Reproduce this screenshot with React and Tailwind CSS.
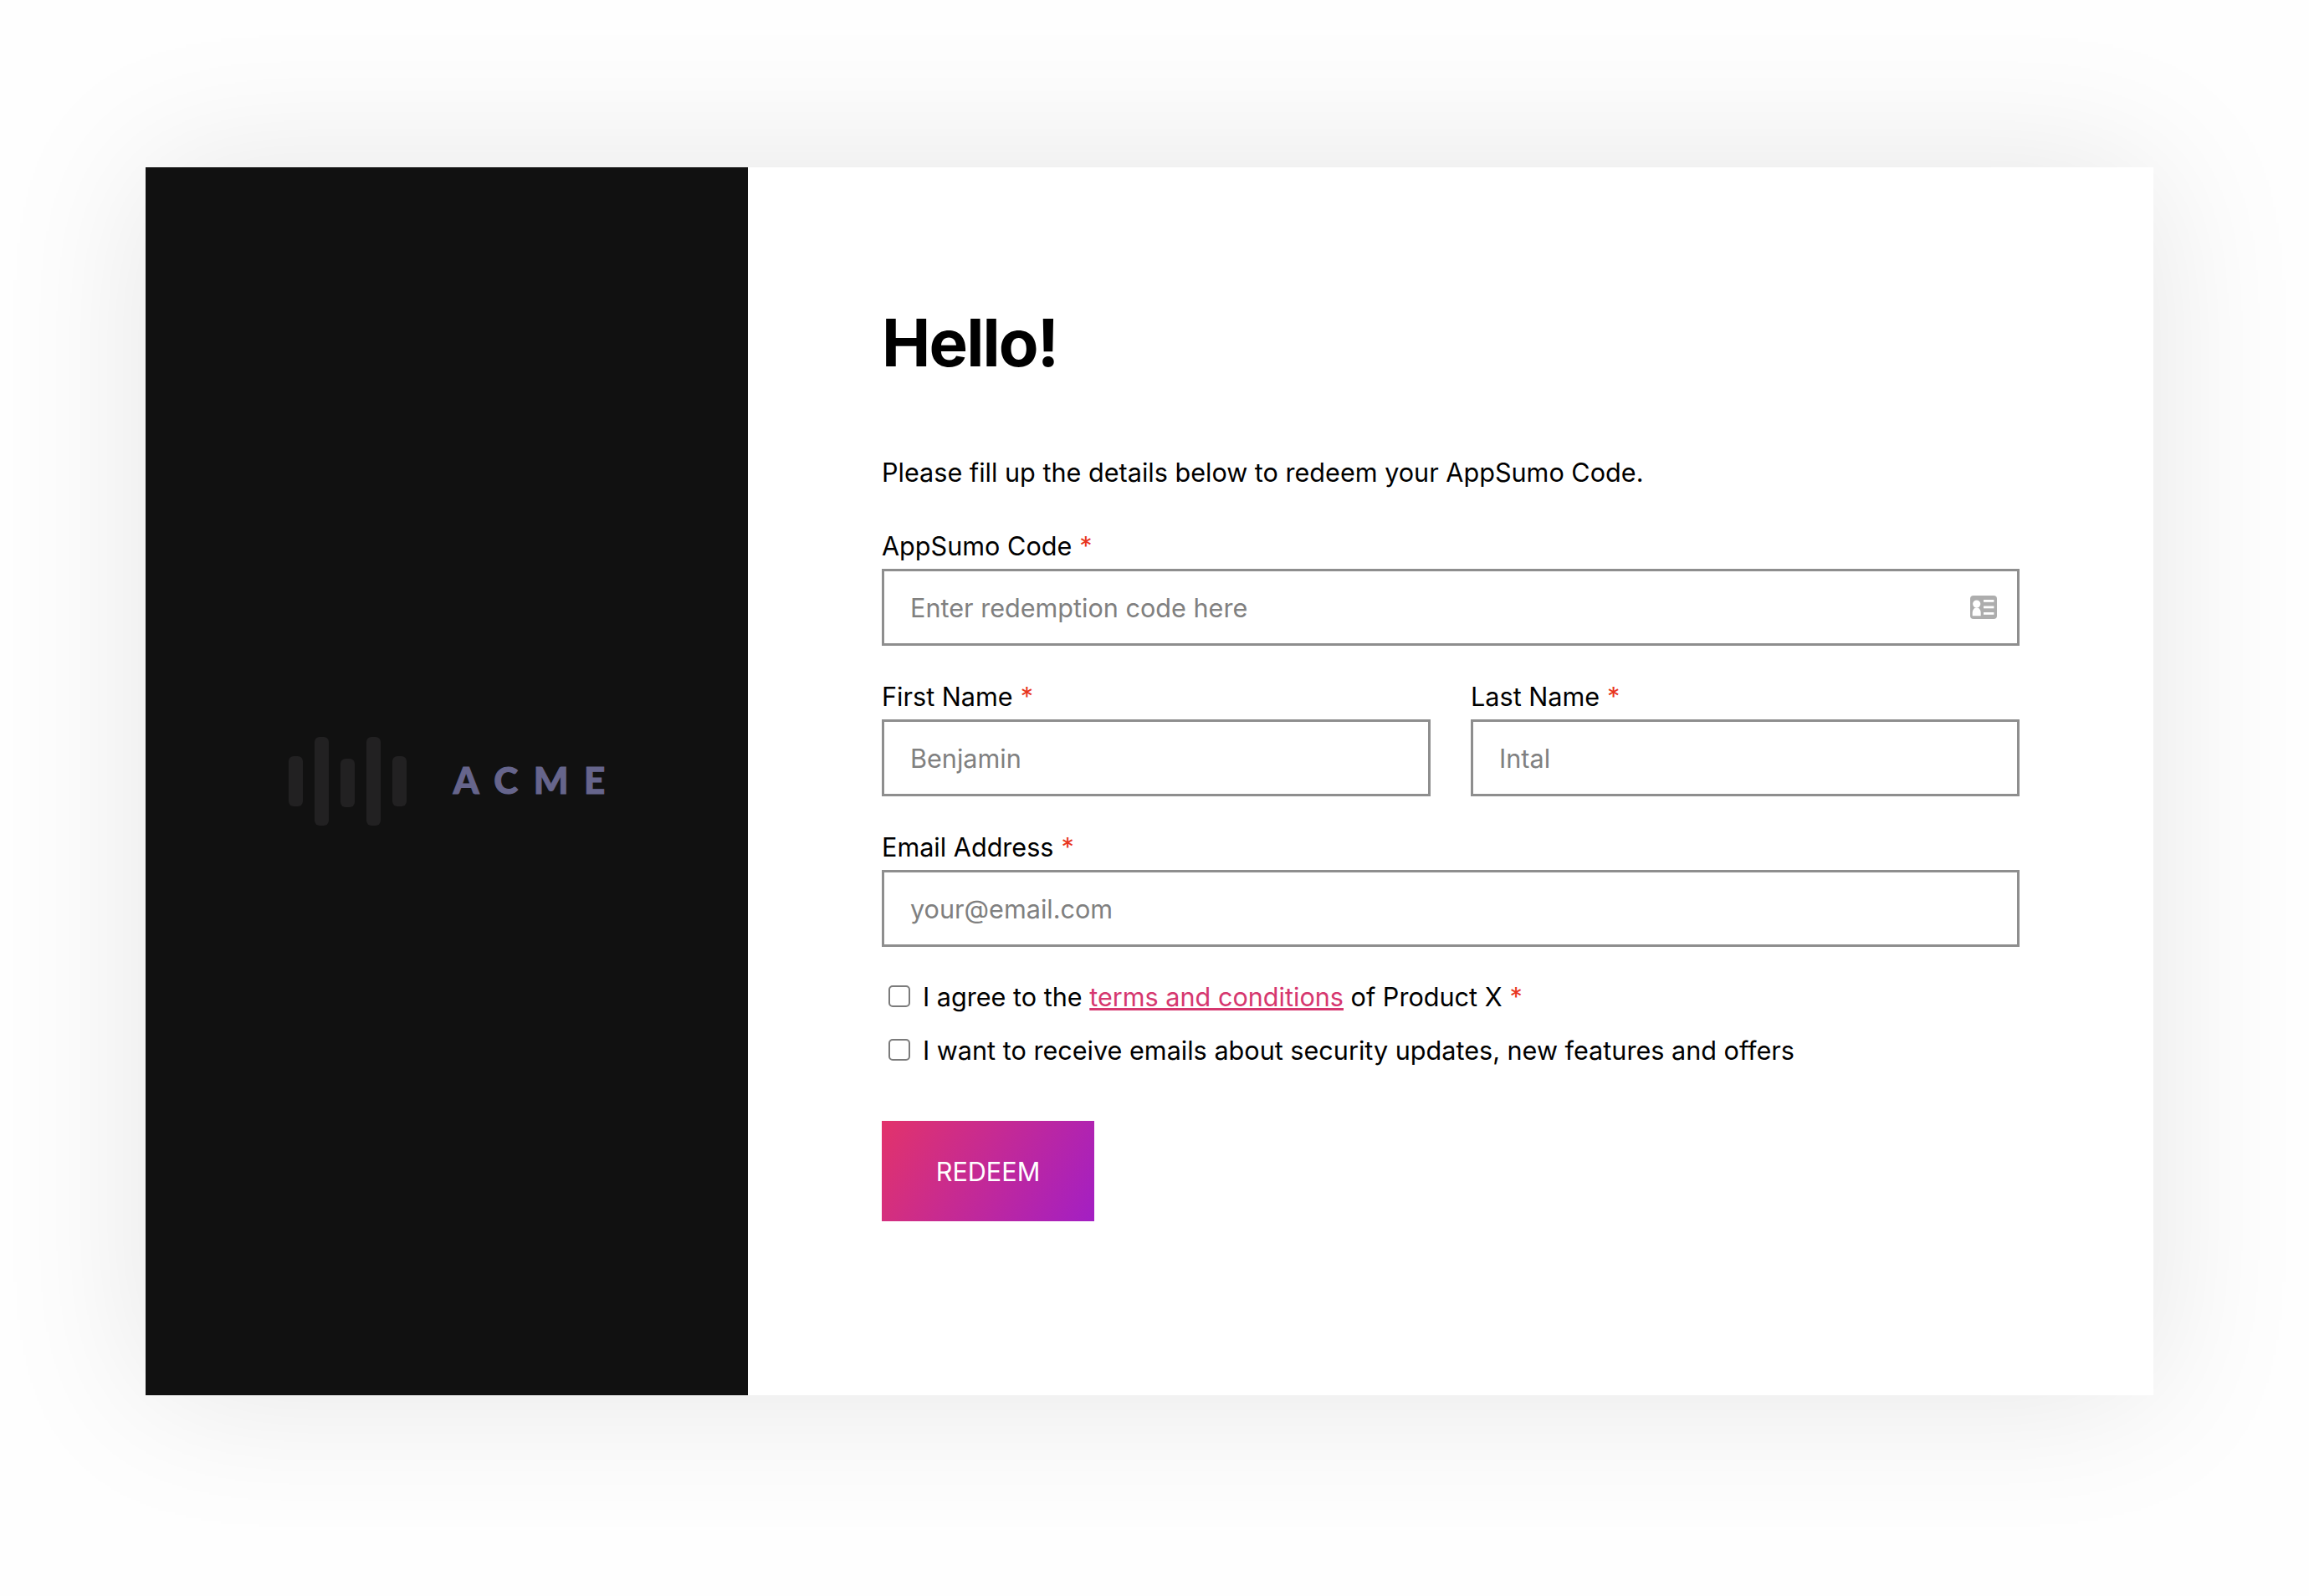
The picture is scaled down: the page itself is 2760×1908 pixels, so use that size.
import React from "react";

const Req = () => <span className="text-[#e8351e] ml-[9px]">*</span>;

const Field = ({ label, placeholder, icon }) => (
  <div className="flex flex-col">
    <label className="text-[30.6px] leading-[40px] text-black">
      {label}
      <Req />
    </label>
    <div className="relative mt-[7px]">
      <input
        placeholder={placeholder}
        className="w-full h-[92px] border-[3px] border-[#8e8e8e] px-[31px] text-[30.6px] text-black placeholder:text-[#808080] outline-none"
      />
      {icon}
    </div>
  </div>
);

const CardIcon = () => (
  <svg
    className="absolute right-[27px] top-1/2 -translate-y-1/2"
    width="32"
    height="28"
    viewBox="0 0 32 28"
  >
    <rect width="32" height="28" rx="4" fill="#adadad" />
    <circle cx="7.7" cy="10" r="4.6" fill="#fff" />
    <path d="M2.7 24.3v-3.6c0-3.6 2.2-6.5 5-6.5s5 2.9 5 6.5v3.6z" fill="#fff" />
    <rect x="16" y="5" width="12.4" height="2.8" fill="#fff" />
    <rect x="16" y="12.5" width="12.4" height="2.8" fill="#fff" />
    <rect x="16" y="20" width="12.4" height="2.8" fill="#fff" />
  </svg>
);

const Logo = () => (
  <div className="flex items-center gap-[56px]">
    <svg width="141" height="106" viewBox="0 0 141 106" fill="#222122">
      <rect x="0" y="23" width="17" height="60" rx="6" />
      <rect x="31" y="0" width="17" height="106" rx="6" />
      <rect x="62" y="26" width="17" height="58" rx="6" />
      <rect x="93" y="0" width="17" height="106" rx="6" />
      <rect x="124" y="23" width="17" height="60" rx="6" />
    </svg>
    <span className="font-['Lato',sans-serif] font-black text-[44px] leading-none tracking-[18.5px] -mr-[18.5px] mb-[4px] text-[#66658c] [-webkit-text-stroke:1px_#66658c]">
      ACME
    </span>
  </div>
);

const Check = () => (
  <input
    type="checkbox"
    className="appearance-none w-[26px] h-[26px] mb-[2px] rounded-[5px] border-[2px] border-[#7b7b7b] bg-white"
  />
);

export default function App() {
  return (
    <div className="min-h-[1908px] bg-[#fefefe] pt-[200px] pl-[174px] font-['Inter',sans-serif]">
      <div className="flex w-[2400px] h-[1468px] bg-white shadow-[0_0_170px_rgba(0,0,0,0.1)]">
        <div className="w-[720px] bg-[#111111] flex items-center justify-center">
          <Logo />
        </div>
        <div className="flex-1 pl-[160px] pr-[160px] pt-[163px]">
          <h1 className="text-[78px] leading-[94px] tracking-[-1.8px] font-bold text-black">Hello!</h1>
          <p className="mt-[88px] text-[30.6px] leading-[40px] text-black">
            Please fill up the details below to redeem your AppSumo Code.
          </p>
          <div className="mt-[48px] flex flex-col gap-[41px]">
            <Field label="AppSumo Code" placeholder="Enter redemption code here" icon={<CardIcon />} />
            <div className="grid grid-cols-2 gap-[48px]">
              <Field label="First Name" placeholder="Benjamin" />
              <Field label="Last Name" placeholder="Intal" />
            </div>
            <Field label="Email Address" placeholder="your@email.com" />
          </div>
          <div className="mt-[40px] flex flex-col gap-[24px] text-[30.6px] leading-[40px] text-black">
            <label className="flex items-center gap-[15px] pl-[8px]">
              <Check />
              <span>
                I agree to the{" "}
                <a className="text-[#d6376f] underline">terms and conditions</a> of Product X
                <Req />
              </span>
            </label>
            <label className="flex items-center gap-[15px] pl-[8px]">
              <Check />
              <span>I want to receive emails about security updates, new features and offers</span>
            </label>
          </div>
          <button className="block mt-[64px] w-[254px] h-[120px] pt-[2px] bg-linear-[120deg] from-[#e2336b] to-[#a31fc4] text-white text-[30.6px]">
            REDEEM
          </button>
        </div>
      </div>
    </div>
  );
}
